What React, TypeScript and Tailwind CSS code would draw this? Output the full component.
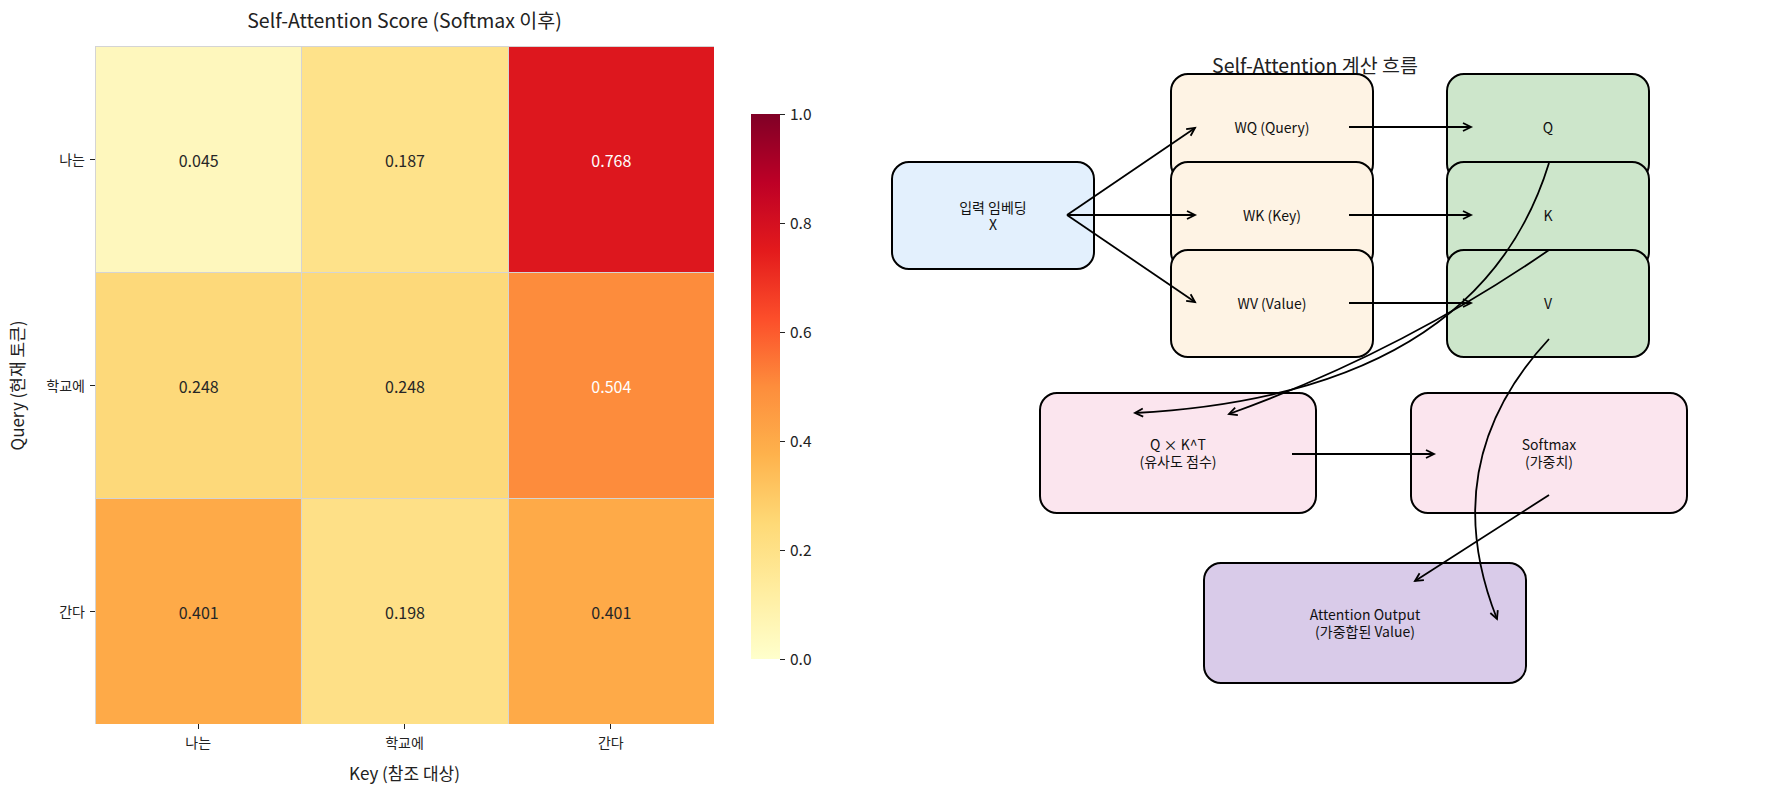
import React from 'react';

type Pt = [number, number];

const FONT = "font-['Noto_Sans_CJK_KR','Noto_Sans',sans-serif]";

const heatRows = [
  {
    label: '나는',
    cells: [
      { v: '0.045', cls: 'bg-[#fef7bd] text-[#262626]' },
      { v: '0.187', cls: 'bg-[#fee28a] text-[#262626]' },
      { v: '0.768', cls: 'bg-[#dd171e] text-white' },
    ],
  },
  {
    label: '학교에',
    cells: [
      { v: '0.248', cls: 'bg-[#fdd97a] text-[#262626]' },
      { v: '0.248', cls: 'bg-[#fdd97a] text-[#262626]' },
      { v: '0.504', cls: 'bg-[#fd8c3c] text-white' },
    ],
  },
  {
    label: '간다',
    cells: [
      { v: '0.401', cls: 'bg-[#feaa48] text-[#262626]' },
      { v: '0.198', cls: 'bg-[#fee087] text-[#262626]' },
      { v: '0.401', cls: 'bg-[#feaa48] text-[#262626]' },
    ],
  },
];

const cbTicks = ['1.0', '0.8', '0.6', '0.4', '0.2', '0.0'];

// diagram nodes (panel coords)
const nodes = [
  { text: ['입력 임베딩', 'X'], cls: 'left-[41px] top-[161px] w-[204px] h-[109px] bg-[#e3f0fd]' },
  { text: ['WQ (Query)'], cls: 'left-[320px] top-[73px] w-[204px] h-[109px] bg-[#fef3e4]' },
  { text: ['WK (Key)'], cls: 'left-[320px] top-[161px] w-[204px] h-[109px] bg-[#fef3e4]' },
  { text: ['WV (Value)'], cls: 'left-[320px] top-[249px] w-[204px] h-[109px] bg-[#fef3e4]' },
  { text: ['Q'], cls: 'left-[596px] top-[73px] w-[204px] h-[109px] bg-[#cde6cb]' },
  { text: ['K'], cls: 'left-[596px] top-[161px] w-[204px] h-[109px] bg-[#cde6cb]' },
  { text: ['V'], cls: 'left-[596px] top-[249px] w-[204px] h-[109px] bg-[#cde6cb]' },
  { text: ['Q × K^T', '(유사도 점수)'], cls: 'left-[189px] top-[392px] w-[278px] h-[122px] bg-[#fbe5ee]' },
  { text: ['Softmax', '(가중치)'], cls: 'left-[560px] top-[392px] w-[278px] h-[122px] bg-[#fbe5ee]' },
  { text: ['Attention Output', '(가중합된 Value)'], cls: 'left-[353px] top-[562px] w-[324px] h-[122px] bg-[#d9cbe9]' },
];

// arrows in page coords
const arrows: { s: Pt; e: Pt; c?: Pt }[] = [
  { s: [1067, 215], e: [1195, 128] },
  { s: [1067, 215], e: [1195, 215] },
  { s: [1067, 215], e: [1195, 302] },
  { s: [1349, 127], e: [1471, 127] },
  { s: [1349, 215], e: [1471, 215] },
  { s: [1349, 303], e: [1471, 303] },
  { s: [1549, 163], e: [1135, 413], c: [1478, 394] },
  { s: [1549, 250], e: [1229, 414], c: [1401, 352] },
  { s: [1549, 339], e: [1497, 619], c: [1435, 462] },
  { s: [1292, 454], e: [1434, 454] },
  { s: [1549, 495], e: [1415, 581] },
];

function Arrow({ s, e, c }: { s: Pt; e: Pt; c?: Pt }) {
  const from = c ?? s;
  const dx = e[0] - from[0];
  const dy = e[1] - from[1];
  const len = Math.hypot(dx, dy);
  const ux = dx / len;
  const uy = dy / len;
  const hl = 8;
  const hw = 4;
  const p1 = [e[0] - ux * hl - uy * hw, e[1] - uy * hl + ux * hw];
  const p2 = [e[0] - ux * hl + uy * hw, e[1] - uy * hl - ux * hw];
  const line = c
    ? `M ${s[0]} ${s[1]} Q ${c[0]} ${c[1]} ${e[0]} ${e[1]}`
    : `M ${s[0]} ${s[1]} L ${e[0]} ${e[1]}`;
  return (
    <g fill="none" stroke="#000" strokeWidth={1.8}>
      <path d={line} />
      <path d={`M ${p1[0]} ${p1[1]} L ${e[0]} ${e[1]} L ${p2[0]} ${p2[1]}`} />
    </g>
  );
}

export default function App() {
  return (
    <div className={`w-[1789px] h-[790px] bg-white flex text-[#222] ${FONT}`}>
      {/* Heatmap panel */}
      <div className="w-[850px] shrink-0">
        <div className="h-[46px] pt-[8px]">
          <div className="ml-[95px] w-[619px] text-center text-[19.5px] leading-[24px] whitespace-nowrap">
            Self-Attention Score (Softmax 이후)
          </div>
        </div>

        <div className="flex">
          <div className="w-[34px] h-[678px] flex items-center justify-center">
            <span className="-rotate-90 text-[17px] leading-none whitespace-nowrap">
              Query (현재 토큰)
            </span>
          </div>
          <div className="w-[61px] h-[678px] flex flex-col">
            {heatRows.map((r) => (
              <div key={r.label} className="flex-1 flex items-center justify-end">
                <span className="mr-[5px] text-[14px] leading-none">{r.label}</span>
                <span className="w-[5px] h-px bg-[#222]" />
              </div>
            ))}
          </div>
          <div className="w-[619px] h-[678px] grid grid-cols-3 grid-rows-3 gap-px bg-[#d4d4d4] border-t border-l border-[#d4d4d4]">
            {heatRows.flatMap((r, i) =>
              r.cells.map((c, j) => (
                <div key={`${i}-${j}`} className={`flex items-center justify-center text-[16px] ${c.cls}`}>
                  {c.v}
                </div>
              ))
            )}
          </div>
          <div className="ml-[37px] mt-[68px] h-[545px] flex">
            <div className="w-[29px] h-full bg-[linear-gradient(to_top,#ffffcc_0%,#ffeda0_12.5%,#fed976_25%,#feb24c_37.5%,#fd8d3c_50%,#fc4e2a_62.5%,#e31a1c_75%,#bd0026_87.5%,#800026_100%)]" />
            <div className="h-full flex flex-col justify-between">
              {cbTicks.map((t) => (
                <div key={t} className="h-0 flex items-center">
                  <span className="w-[5px] h-px bg-[#222]" />
                  <span className="ml-[5px] text-[15.5px] leading-none">{t}</span>
                </div>
              ))}
            </div>
          </div>
        </div>

        <div className="ml-[95px] w-[619px] grid grid-cols-3">
          {heatRows.map((r) => (
            <div key={r.label} className="flex flex-col items-center">
              <span className="w-px h-[5px] bg-[#222]" />
              <span className="mt-[5px] text-[14px] leading-[16px]">{r.label}</span>
            </div>
          ))}
        </div>
        <div className="ml-[95px] w-[619px] mt-[13px] text-center text-[17px] leading-[20px]">
          Key (참조 대상)
        </div>
      </div>

      {/* Flow diagram panel */}
      <div className="relative w-[939px] h-[790px]">
        <div className="pt-[53px] w-[930px] text-center text-[19.5px] leading-[24px]">
          Self-Attention 계산 흐름
        </div>
        {nodes.map((n, i) => (
          <div
            key={i}
            className={`absolute flex flex-col items-center justify-center text-center rounded-[18px] border-2 border-black text-[14px] leading-[17px] text-[#111] ${n.cls}`}
          >
            {n.text.map((t) => (
              <span key={t}>{t}</span>
            ))}
          </div>
        ))}
        <svg
          className="absolute left-0 top-0 pointer-events-none"
          width={939}
          height={790}
          viewBox="850 0 939 790"
        >
          {arrows.map((a, i) => (
            <Arrow key={i} {...a} />
          ))}
        </svg>
      </div>
    </div>
  );
}
